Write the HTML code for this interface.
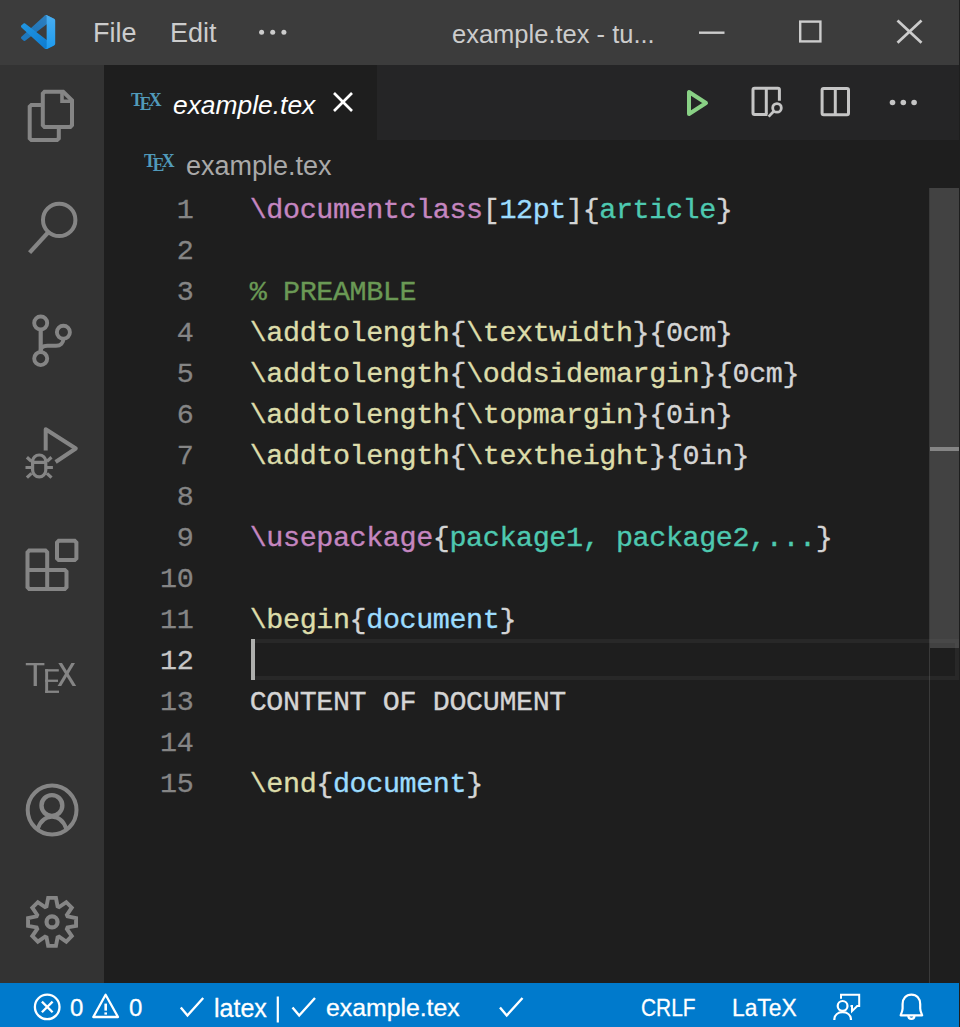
<!DOCTYPE html>
<html><head><meta charset="utf-8">
<style>
*{margin:0;padding:0;box-sizing:border-box}
html,body{width:960px;height:1027px;overflow:hidden;background:#1e1e1e}
body{position:relative;font-family:"Liberation Sans",sans-serif}
.abs{position:absolute}
#title{left:0;top:0;width:960px;height:65px;background:#3c3c3c}
#act{left:0;top:65px;width:104px;height:918px;background:#333333}
#tabs{left:104px;top:65px;width:856px;height:75px;background:#252526}
#tab{left:104px;top:65px;width:273px;height:75px;background:#1e1e1e}
#status{left:0;top:983px;width:960px;height:44px;background:#007acc}
#rborder{left:959px;top:0;width:1px;height:1027px;background:#1e1e1e}
.ui{color:#cccccc;font-size:27px;white-space:nowrap;line-height:1}
.code{left:249.7px;top:188px;font-family:"Liberation Mono",monospace;font-size:28.4px;letter-spacing:-0.39px;line-height:41px;color:#d4d4d4}
.code div{height:41px;position:relative;top:1.5px;white-space:pre;-webkit-text-stroke:0.35px currentColor}
.ln{left:104px;top:188px;width:89.4px;text-align:right;font-family:"Liberation Mono",monospace;font-size:28.4px;letter-spacing:-0.39px;line-height:41px;color:#858585}
.ln div{height:41px;position:relative;top:1.5px;-webkit-text-stroke:0.3px currentColor}
.k{color:#c586c0}.f{color:#dcdcaa}.t{color:#4ec9b0}.v{color:#9cdcfe}.c{color:#6a9955}
svg{position:absolute;overflow:visible}
</style></head><body>
<div id="title" class="abs"></div>
<div id="act" class="abs"></div>
<div id="tabs" class="abs"></div>
<div id="tab" class="abs"></div>
<div id="status" class="abs"></div>

<!-- title bar texts -->
<div class="abs ui" style="left:93px;top:20px">File</div>
<div class="abs ui" style="left:170px;top:20px">Edit</div>
<div class="abs ui" style="left:452px;top:22px;font-size:25.5px">example.tex - tu...</div>

<!-- tab -->
<div class="abs ui" style="left:173px;top:92px;color:#fff;font-style:italic;font-size:26.4px">example.tex</div>
<!-- breadcrumb -->
<div class="abs ui" style="left:186px;top:153px;color:#a9a9a9">example.tex</div>

<!-- line numbers -->
<div class="abs ln">
<div>1</div><div>2</div><div>3</div><div>4</div><div>5</div><div>6</div><div>7</div><div>8</div><div>9</div><div>10</div><div>11</div><div style="color:#c6c6c6">12</div><div>13</div><div>14</div><div>15</div>
</div>

<!-- code -->
<div class="abs code">
<div><span class="k">\documentclass</span>[<span class="v">12pt</span>]{<span class="t">article</span>}</div>
<div></div>
<div class="c">% PREAMBLE</div>
<div><span class="f">\addtolength</span>{<span class="f">\textwidth</span>}{0cm}</div>
<div><span class="f">\addtolength</span>{<span class="f">\oddsidemargin</span>}{0cm}</div>
<div><span class="f">\addtolength</span>{<span class="f">\topmargin</span>}{0in}</div>
<div><span class="f">\addtolength</span>{<span class="f">\textheight</span>}{0in}</div>
<div></div>
<div><span class="k">\usepackage</span>{<span class="t">package1, package2,...</span>}</div>
<div></div>
<div><span class="f">\begin</span>{<span class="v">document</span>}</div>
<div></div>
<div>CONTENT OF DOCUMENT</div>
<div></div>
<div><span class="f">\end</span>{<span class="v">document</span>}</div>
</div>

<!-- status bar -->
<div class="abs ui" style="left:70px;top:996px;color:#fff;-webkit-text-stroke:0.3px #fff;font-size:24px">0</div>
<div class="abs ui" style="left:129px;top:996px;color:#fff;-webkit-text-stroke:0.3px #fff;font-size:24px">0</div>
<div class="abs ui" style="left:214px;top:996px;color:#fff;-webkit-text-stroke:0.3px #fff;font-size:25px">latex</div>
<div class="abs ui" style="left:326px;top:996px;color:#fff;-webkit-text-stroke:0.3px #fff;font-size:24.8px">example.tex</div>
<div class="abs ui" style="left:641px;top:996px;color:#fff;-webkit-text-stroke:0.3px #fff;font-size:24px;transform:scaleX(0.87);transform-origin:0 0">CRLF</div>
<div class="abs ui" style="left:732px;top:996px;color:#fff;-webkit-text-stroke:0.3px #fff;font-size:24px;transform:scaleX(0.95);transform-origin:0 0">LaTeX</div>


<svg class="abs" style="left:0;top:0" width="960" height="1027" viewBox="0 0 960 1027">
<!-- VS Code logo -->
<defs>
<linearGradient id="gR" x1="0" y1="0" x2="0" y2="1"><stop offset="0" stop-color="#4aaef0"/><stop offset="1" stop-color="#1d9bef"/></linearGradient>
<linearGradient id="gU" x1="1" y1="0" x2="0" y2="1"><stop offset="0" stop-color="#3184c4"/><stop offset="0.6" stop-color="#2276b8"/><stop offset="1" stop-color="#1c78c0"/></linearGradient>
<linearGradient id="gL" x1="0" y1="0" x2="1" y2="1"><stop offset="0" stop-color="#2196e2"/><stop offset="1" stop-color="#0b78cd"/></linearGradient>
</defs>
<g transform="translate(21,15) scale(0.342)">
<path fill="url(#gU)" d="M96.4614 10.7962L75.8569 0.875542C73.4719 -0.272773 70.6217 0.211611 68.75 2.08333L1.29858 63.5832C-0.515693 65.2373 -0.513607 68.0937 1.30308 69.7452L6.81272 74.754C8.29793 76.1042 10.5347 76.2036 12.1338 74.9905L93.3609 13.3699C96.086 11.3026 100 13.2462 100 16.6667V16.4275C100 14.0265 98.6246 11.8378 96.4614 10.7962Z"/>
<path fill="url(#gL)" d="M96.4614 89.2038L75.8569 99.1245C73.4719 100.273 70.6217 99.7884 68.75 97.9167L1.29858 36.4169C-0.515693 34.7627 -0.513607 31.9063 1.30308 30.2548L6.81272 25.246C8.29793 23.8958 10.5347 23.7964 12.1338 25.0095L93.3609 86.6301C96.086 88.6974 100 86.7538 100 83.3334V83.5726C100 85.9735 98.6246 88.1622 96.4614 89.2038Z"/>
<path fill="url(#gR)" d="M75.8578 99.1263C73.4721 100.274 70.6219 99.7885 68.75 97.9166C71.0564 100.223 75 98.5895 75 95.3278V4.67213C75 1.41039 71.0564 -0.223106 68.75 2.08329C70.6219 0.211402 73.4721 -0.273666 75.8578 0.873633L96.4587 10.7807C98.6234 11.8217 100 14.0112 100 16.4132V83.5871C100 85.9891 98.6234 88.1786 96.4586 89.2196L75.8578 99.1263Z"/>
</g>
<!-- menu ellipsis -->
<g fill="#cccccc"><circle cx="261.6" cy="32.2" r="2.5"/><circle cx="272.7" cy="32.2" r="2.5"/><circle cx="283.9" cy="32.2" r="2.5"/></g>
<!-- window controls -->
<g stroke="#cccccc" stroke-width="2.4" fill="none">
<line x1="699" y1="32.7" x2="724.5" y2="32.7"/>
<rect x="800.2" y="21.6" width="20.2" height="19.8"/>
<line x1="897.5" y1="20.5" x2="921.5" y2="42.8" stroke-width="2.7"/><line x1="921.5" y1="20.5" x2="897.5" y2="42.8" stroke-width="2.7"/>
</g>
<!-- activity bar icons -->
<g stroke="#858585" stroke-width="4" fill="none" stroke-linejoin="miter">
<path d="M44.5 91.8 L63.2 91.8 L72 100.3 L72 125.2 L70.3 126.9 L44.5 126.9 L42.8 125.2 L42.8 93.5 Z"/>
<path d="M62 91.8 L62 101.2 L72 101.2" stroke-width="3.6"/>
<path d="M42.8 105 L31.4 105 L29.7 106.7 L29.7 138.3 L31.4 140 L57.1 140 L58.8 138.3 L58.8 126.9"/>
<circle cx="59.2" cy="219.9" r="16.2"/>
<line x1="48.5" y1="232" x2="29.6" y2="252.6" stroke-width="4.2"/>
<circle cx="40.7" cy="323" r="6.5" stroke-width="3.9"/>
<circle cx="40.7" cy="358.6" r="6.5" stroke-width="3.9"/>
<circle cx="63.4" cy="332.3" r="6.5" stroke-width="3.9"/>
<path d="M40.7 329.5 L40.7 352.5" stroke-width="4.2"/>
<path d="M40.7 351 C40.7 347.5 43.5 345.8 47.4 345.8 L56.1 345.8 C60.5 345.8 63.4 343 63.4 338.5" stroke-width="4"/>
<path d="M45.7 450.5 L45.7 429.3 L75.8 448.5 L55.6 462" stroke-linejoin="round"/>
<path d="M32.6 461.6 A6.6 6.6 0 0 1 45.8 461.6 L45.8 470 A6.6 6.9 0 0 1 32.6 470 Z M32.6 462.4 L45.8 462.4 M26.9 457.3 L31.3 461.2 M51.5 457.3 L47.1 461.2 M25.5 467.5 L31 467.5 M47.4 467.5 L52.9 467.5 M26.9 477.7 L31.5 473.4 M51.5 477.7 L46.9 473.4" stroke-width="3.2"/>
<path d="M27.5 552.3 L29.2 550.6 L45.5 550.6 L47.2 552.3 L47.2 569.9 L64.8 569.9 L66.5 571.6 L66.5 587.2 L64.8 588.9 L29.2 588.9 L27.5 587.2 Z M27.5 569.9 L47.2 569.9 M47.2 569.9 L47.2 588.9"/>
<path d="M58.7 540.8 L74.7 540.8 L76.4 542.5 L76.4 558.4 L74.7 560.1 L58.7 560.1 L57 558.4 L57 542.5 Z"/>
<circle cx="52.1" cy="810" r="24.4"/>
<circle cx="51.9" cy="805.5" r="10.4" stroke-width="4.4"/>
<path d="M37.6 829 C40.5 820.5 45.5 816.7 52 816.7 C58.5 816.7 63.5 820.5 66.4 829"/>
<polygon points="46.52,906.46 48.15,897.90 55.95,897.90 57.58,906.46 59.06,907.07 66.26,902.17 71.78,907.69 66.88,914.89 67.49,916.37 76.05,918.00 76.05,925.80 67.49,927.43 66.88,928.91 71.78,936.11 66.26,941.63 59.06,936.73 57.58,937.34 55.95,945.90 48.15,945.90 46.52,937.34 45.04,936.73 37.84,941.63 32.32,936.11 37.22,928.91 36.61,927.43 28.05,925.80 28.05,918.00 36.61,916.37 37.22,914.89 32.32,907.69 37.84,902.17 45.04,907.07" stroke-width="3.9"/>
<circle cx="52.05" cy="921.9" r="5.5" stroke-width="4.2"/>
</g>
<g fill="#858585">
<rect x="25.8" y="663" width="18.6" height="2.3"/>
<rect x="33.6" y="663" width="3.3" height="23"/>
<rect x="45.2" y="669.2" width="2.9" height="23.7"/>
<rect x="45.2" y="669.2" width="13.6" height="2.3"/>
<rect x="45.2" y="679.6" width="12.8" height="2.3"/>
<rect x="45.2" y="690.6" width="13.8" height="2.3"/>
<polygon points="58.3,663 62,663 76.2,686 72.5,686"/>
<polygon points="71.4,663 75,663 61.2,686 57.6,686"/>
</g>
<!-- tab close -->
<g stroke="#ffffff" stroke-width="2.6"><line x1="334" y1="93" x2="352" y2="111"/><line x1="352" y1="93" x2="334" y2="111"/></g>
<!-- editor actions -->
<path d="M689 92 L689 114 L706 103 Z" stroke="#89d185" stroke-width="4" fill="none" stroke-linejoin="round"/>
<g stroke="#c5c5c5" stroke-width="3" fill="none">
<path d="M767.4 114.4 L754.5 114.4 Q753 114.4 753 112.9 L753 89.8 Q753 88.3 754.5 88.3 L777.9 88.3 Q779.4 88.3 779.4 89.8 L779.4 100.8"/>
<line x1="766.3" y1="88.3" x2="766.3" y2="114.4"/>
<circle cx="777" cy="107.9" r="4.3" stroke-width="2.8"/>
<line x1="773.8" y1="111.2" x2="768.6" y2="116.6" stroke-width="2.8"/>
<rect x="822.1" y="88.4" width="26.4" height="26.4" rx="1.5"/>
<line x1="835.3" y1="88.4" x2="835.3" y2="114.8"/>
</g>
<g fill="#c5c5c5"><circle cx="892.5" cy="102.5" r="2.8"/><circle cx="903.3" cy="102.5" r="2.8"/><circle cx="914.1" cy="102.5" r="2.8"/></g>
<!-- tex icons -->
<g fill="#519aba" font-family="Liberation Serif" font-weight="bold" font-size="18">
<text transform="translate(130.9,105.6) scale(0.97,1)">T</text><text transform="translate(139.7,110) scale(0.97,1)">E</text><text transform="translate(149,105.6) scale(0.97,1)">X</text>
<text transform="translate(144,166.5) scale(0.97,1)">T</text><text transform="translate(152.7,170.9) scale(0.97,1)">E</text><text transform="translate(162,166.5) scale(0.97,1)">X</text>
</g>
<!-- current line -->
<path d="M255 641 L957 641 L957 678 L255 678" stroke="#282828" stroke-width="4" fill="none"/>
<rect x="251" y="639" width="4" height="41" fill="#aeafad"/>
<!-- scrollbar -->
<rect x="930" y="188" width="29" height="460" fill="rgb(121,121,121)" fill-opacity="0.4"/>
<rect x="930" y="447" width="29" height="4" fill="#858585"/>
<rect x="929" y="188" width="1" height="795" fill="rgb(127,127,127)" fill-opacity="0.3"/>
<!-- status bar icons -->
<g stroke="#ffffff" fill="none" stroke-width="2.3">
<circle cx="47.2" cy="1006.9" r="12.3"/>
<line x1="41.9" y1="1001.6" x2="52.6" y2="1012.3"/><line x1="52.6" y1="1001.6" x2="41.9" y2="1012.3"/>
<path d="M105.6 994.8 L93.3 1017 L118 1017 Z" stroke-linejoin="round"/>
<path d="M180.8 1007.5 L187.5 1015.5 L203.2 998" stroke-width="2.4"/>
<path d="M292.5 1007.5 L299.2 1015.5 L315 998" stroke-width="2.4"/>
<path d="M500 1007.5 L506.7 1015.5 L522.5 998" stroke-width="2.4"/>
<path d="M841 998.8 L841 994.8 L859.2 994.8 L859.2 1006.1 L857.2 1006.1 L852 1011.1 L852 1006.1 L850.5 1006.1" stroke-width="2"/>
<circle cx="842.6" cy="1005.9" r="4.9" stroke-width="2.2"/>
<path d="M834.3 1020 C834.3 1015 838 1012.2 842.6 1012.2 C847.2 1012.2 851 1015 851 1020" stroke-width="2.2"/>
<path d="M911.4 994.6 C906 994.6 902.6 998.5 902.6 1004 L902.6 1008.5 C902.6 1011 901.6 1013 900.6 1015.3 L922.2 1015.3 C921.2 1013 920.2 1011 920.2 1008.5 L920.2 1004 C920.2 998.5 916.8 994.6 911.4 994.6 Z" stroke-width="2.2" stroke-linejoin="round"/>
<path d="M908.4 1016 A3 2.9 0 0 0 914.4 1016" stroke-width="2.2"/>
</g>
<g fill="#ffffff"><rect x="104.4" y="1003.6" width="2.6" height="7"/><rect x="104.4" y="1012.4" width="2.6" height="2.2"/>
<rect x="276.7" y="996.5" width="2.2" height="26"/></g>
</svg>

<div id="rborder" class="abs"></div>
</body></html>
